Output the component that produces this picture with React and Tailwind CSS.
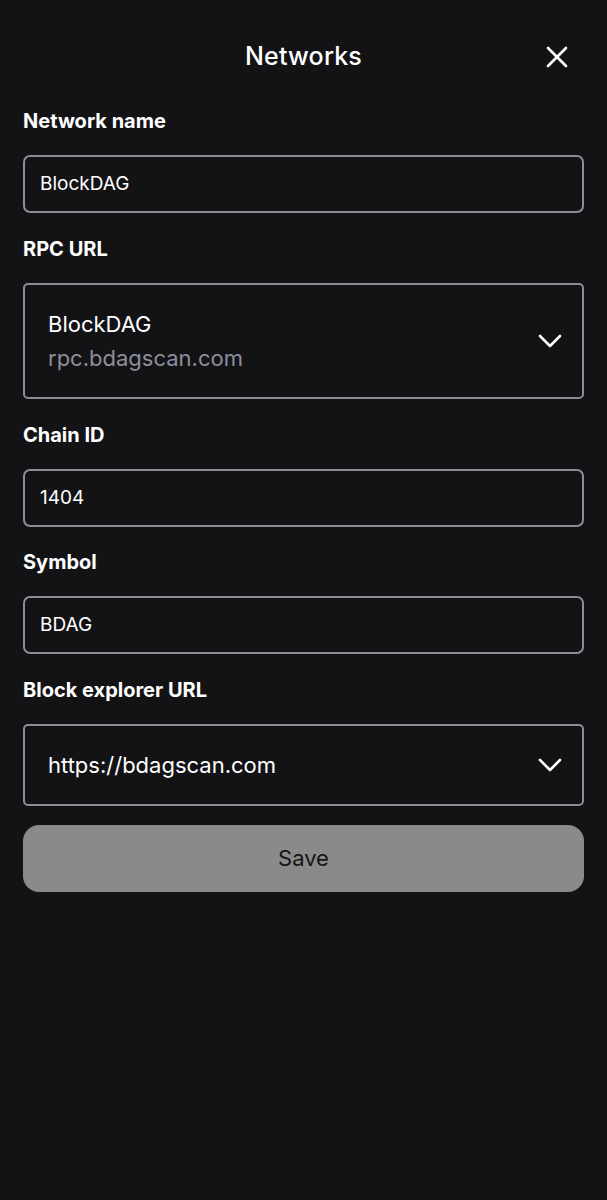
import React from "react";

const Chevron = () => (
  <svg width="24" height="14" viewBox="0 0 24 14" fill="none">
    <polyline points="2,2 12,12 22,2" stroke="#ffffff" strokeWidth="2.6" strokeLinecap="round" strokeLinejoin="round" />
  </svg>
);

const Label = ({ children, className = "" }) => (
  <div className={`text-[20px] leading-[24px] font-bold text-white ${className}`}>{children}</div>
);

const TextField = ({ value }) => (
  <div className="mt-[22px] h-[58px] rounded-[7px] border-2 border-[#8d8d98] flex items-center px-[15px] text-[19px] text-white">
    {value}
  </div>
);

export default function App() {
  return (
    <div
      className="min-h-[1200px] w-full bg-[#131316] text-white px-[23px]"
      style={{ fontFamily: "Inter, 'Liberation Sans', sans-serif" }}
    >
      {/* header */}
      <div className="grid grid-cols-[1fr_auto_1fr] items-center h-[109px] pt-[4px]">
        <div />
        <h1 className="text-[25px] font-medium tracking-[0.2px]">Networks</h1>
        <div className="flex justify-end pr-[16px]">
          <svg width="22" height="22" viewBox="0 0 22 22" fill="none">
            <path d="M2 2 L20 20 M20 2 L2 20" stroke="#ffffff" strokeWidth="2.6" strokeLinecap="round" />
          </svg>
        </div>
      </div>

      <Label>Network name</Label>
      <TextField value="BlockDAG" />

      <Label className="mt-[24px]">RPC URL</Label>
      <div className="mt-[22px] h-[116px] rounded-[5px] border-2 border-[#8d8d98] flex items-center justify-between pl-[23px] pr-[20px]">
        <div className="flex flex-col">
          <span className="text-[22px] leading-[32px] text-white">BlockDAG</span>
          <span className="text-[22px] leading-[32px] text-[#8e8e9b] mt-[2px]">rpc.bdagscan.com</span>
        </div>
        <Chevron />
      </div>

      <Label className="mt-[24px]">Chain ID</Label>
      <TextField value="1404" />

      <Label className="mt-[23px]">Symbol</Label>
      <TextField value="BDAG" />

      <Label className="mt-[24px]">Block explorer URL</Label>
      <div className="mt-[22px] h-[82px] rounded-[5px] border-2 border-[#8d8d98] flex items-center justify-between pl-[23px] pr-[20px]">
        <span className="text-[22px] text-white">https://bdagscan.com</span>
        <Chevron />
      </div>

      <button className="mt-[19px] w-full h-[67px] rounded-[16px] bg-[#8a8a8a] text-[#161616] text-[22px]">
        Save
      </button>
    </div>
  );
}
